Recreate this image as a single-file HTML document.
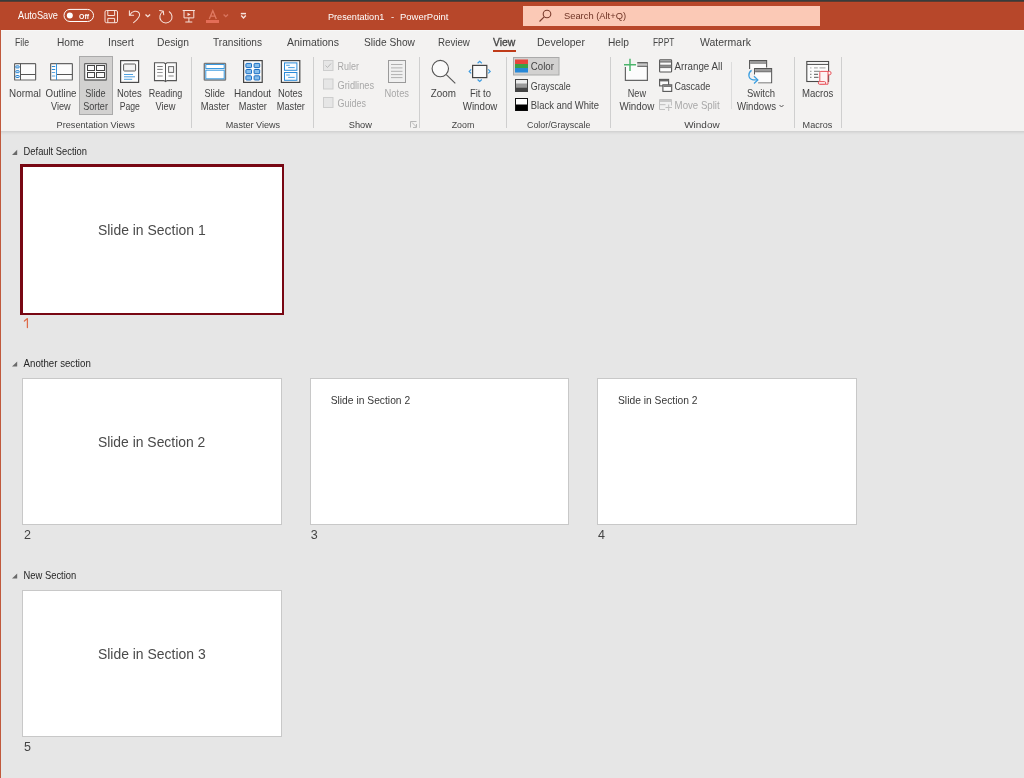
<!DOCTYPE html><html><head><meta charset="utf-8"><title>PowerPoint</title><style>html,body{margin:0;padding:0;overflow:hidden;background:#e6e6e6}</style></head><body><svg width="1024" height="778" viewBox="0 0 1024 778" style="display:block;will-change:transform;font-family:'Liberation Sans',sans-serif"><rect x="0" y="0" width="1024" height="778" fill="#e6e6e6" /><rect x="0" y="0" width="1024" height="30" fill="#b7472a" /><rect x="0" y="0" width="1024" height="1" fill="#373c3c" /><rect x="0" y="1" width="1024" height="1" fill="#5b3b31" /><rect x="0" y="2" width="1024" height="1" fill="#bd4729" /><rect x="0" y="30" width="1024" height="101" fill="#f3f2f1" /><rect x="0" y="30" width="1024" height="1" fill="#f7f7f7" /><rect x="0" y="131" width="1024" height="1" fill="#d3d3d3" /><rect x="0" y="132" width="1024" height="1" fill="#dadada" /><rect x="0" y="133" width="1024" height="1" fill="#e0e0e0" /><rect x="0" y="134" width="1024" height="1" fill="#e4e4e4" /><rect x="0" y="30" width="1" height="748" fill="#c0593c" /><text x="18.00" y="19.1" font-size="10.1" fill="#ffffff" textLength="39.96" lengthAdjust="spacingAndGlyphs" >AutoSave</text><rect x="64" y="9.4" width="29.5" height="12.1" rx="6" fill="none" stroke="#ffffff" stroke-width="1"/><circle cx="69.8" cy="15.4" r="3" fill="#ffffff"/><text x="79.10" y="18.8" font-size="8" fill="#ffffff" font-weight="700" textLength="9.95" lengthAdjust="spacingAndGlyphs" >Off</text><g fill="none" stroke="#f7e3dc" stroke-width="1"><rect x="105" y="10.5" width="12.5" height="12.2" rx="1.5"/><path d="M107.8 10.5v5h6.8v-5M107.8 22.7v-4.3h6.8v4.3"/></g><g fill="none" stroke="#f7e3dc" stroke-width="1.05" stroke-linecap="round"><path d="M129.4 10.8v4.5h4.2"/><path d="M129.8 15C132 10.8 137.5 10 139.3 13.2C140.8 16 137.5 19.5 133.6 22.6"/></g><path d="M145.5 14.5l2.3 2.2l2.3-2.2" fill="none" stroke="#f7e3dc" stroke-width="1.3"/><g fill="none" stroke="#f7e3dc" stroke-width="1.05" stroke-linecap="round"><path d="M169.3 11.8A6.1 6.1 0 1 1 162.9 11.6"/><path d="M159.6 10.6L163.3 11.2L163.7 14.8"/></g><g fill="none" stroke="#f7e3dc" stroke-width="1"><path d="M182.7 10.5h12.2M184 10.5v7.4h9.8v-7.4M188.9 17.9v4.1M185.3 22h7"/></g><path d="M187.5 12.8l3.2 1.6l-3.2 1.6z" fill="#f7e3dc"/><path d="M209.3 19l3.5-8.3l3.5 8.3M210.5 16.1h4.6" fill="none" stroke="#e07a62" stroke-width="1.3"/><rect x="206" y="20" width="13" height="3" fill="#e46d57" /><path d="M223.6 14.5l2.2 2.2l2.2-2.2" fill="none" stroke="#d97560" stroke-width="1.3"/><path d="M240.8 13.6h5.2" stroke="#f7e3dc" stroke-width="1.5"/><path d="M241.2 15.6l2.3 2.4l2.3-2.4" fill="none" stroke="#f7e3dc" stroke-width="1.4"/><text x="328.00" y="20.3" font-size="9.6" fill="#ffffff" textLength="56.30" lengthAdjust="spacingAndGlyphs" >Presentation1</text><text x="391.00" y="20.3" font-size="9.6" fill="#ffffff" >-</text><text x="400.00" y="20.3" font-size="9.6" fill="#ffffff" textLength="48.44" lengthAdjust="spacingAndGlyphs" >PowerPoint</text><rect x="523" y="6" width="297" height="20" fill="#fbc9b6" /><g fill="none" stroke="#7a3b2c" stroke-width="1.1"><circle cx="547" cy="14" r="3.8"/><path d="M544.2 16.8l-4.7 4.7"/></g><text x="564.00" y="19.4" font-size="9.4" fill="#6e3324" textLength="62.01" lengthAdjust="spacingAndGlyphs" >Search (Alt+Q)</text><text x="15.00" y="46" font-size="10.7" fill="#444444" textLength="14.01" lengthAdjust="spacingAndGlyphs" >File</text><text x="57.00" y="46" font-size="10.7" fill="#444444" textLength="26.97" lengthAdjust="spacingAndGlyphs" >Home</text><text x="108.00" y="46" font-size="10.7" fill="#444444" textLength="26.01" lengthAdjust="spacingAndGlyphs" >Insert</text><text x="157.00" y="46" font-size="10.7" fill="#444444" textLength="32.03" lengthAdjust="spacingAndGlyphs" >Design</text><text x="213.00" y="46" font-size="10.7" fill="#444444" textLength="49.04" lengthAdjust="spacingAndGlyphs" >Transitions</text><text x="287.00" y="46" font-size="10.7" fill="#444444" textLength="51.96" lengthAdjust="spacingAndGlyphs" >Animations</text><text x="364.00" y="46" font-size="10.7" fill="#444444" textLength="50.92" lengthAdjust="spacingAndGlyphs" >Slide Show</text><text x="438.00" y="46" font-size="10.7" fill="#444444" textLength="31.88" lengthAdjust="spacingAndGlyphs" >Review</text><text x="537.00" y="46" font-size="10.7" fill="#444444" textLength="47.98" lengthAdjust="spacingAndGlyphs" >Developer</text><text x="608.00" y="46" font-size="10.7" fill="#444444" textLength="20.96" lengthAdjust="spacingAndGlyphs" >Help</text><text x="653.00" y="46" font-size="10.7" fill="#444444" textLength="21.35" lengthAdjust="spacingAndGlyphs" >FPPT</text><text x="700.00" y="46" font-size="10.7" fill="#444444" textLength="50.91" lengthAdjust="spacingAndGlyphs" >Watermark</text><text x="493.00" y="46" font-size="10.7" fill="#454545" textLength="22.39" lengthAdjust="spacingAndGlyphs" stroke="#454545" stroke-width="0.3">View</text><rect x="493" y="50" width="23" height="2" fill="#c03c1a" /><rect x="79.5" y="56.5" width="33" height="58" fill="#d2d1d0" stroke="#aaaaaa" stroke-width="1"/><rect x="14.6" y="63.6" width="21" height="16.4" rx="0.6" fill="#fcfcfc" stroke="#666666" stroke-width="1.2"/><path d="M20.5 63.5v16.5M20.5 74.5h15" stroke="#555" stroke-width="1"/><rect x="15.8" y="65.9" width="3.4" height="2" rx="0.6" fill="#e6f1fb" stroke="#1f7fd0" stroke-width="1"/><rect x="15.8" y="70.7" width="3.4" height="2" rx="0.6" fill="#e6f1fb" stroke="#1f7fd0" stroke-width="1"/><rect x="15.8" y="75.5" width="3.4" height="2" rx="0.6" fill="#e6f1fb" stroke="#1f7fd0" stroke-width="1"/><text x="9.10" y="96.5" font-size="10.6" fill="#444444" textLength="31.73" lengthAdjust="spacingAndGlyphs" >Normal</text><rect x="50.6" y="63.6" width="21.8" height="16.4" rx="0.6" fill="#fcfcfc" stroke="#666666" stroke-width="1.2"/><path d="M57 74.5h15.5" stroke="#555" stroke-width="1"/><path d="M56.5 63.5v16.5" stroke="#3a94dc" stroke-width="1"/><path d="M51.8 66.5h3.4" stroke="#2a8ad8" stroke-width="1"/><path d="M51.8 69.5h3.4" stroke="#2a8ad8" stroke-width="1"/><path d="M51.8 72.5h3.4" stroke="#5aa6e2" stroke-width="1"/><path d="M51.8 76h3.4" stroke="#8cc0ea" stroke-width="1.5"/><text x="45.60" y="96.5" font-size="10.6" fill="#444444" textLength="30.88" lengthAdjust="spacingAndGlyphs" >Outline</text><text x="51.00" y="109.8" font-size="10.6" fill="#444444" textLength="19.69" lengthAdjust="spacingAndGlyphs" >View</text><rect x="84.6" y="63.6" width="21.8" height="16.4" rx="0.6" fill="#fcfcfc" stroke="#666666" stroke-width="1.3"/><g fill="#fafafa" stroke="#444" stroke-width="1"><rect x="87.5" y="65.5" width="7" height="5"/><rect x="96.5" y="65.5" width="8" height="5"/><rect x="87.5" y="72.5" width="7" height="5"/><rect x="96.5" y="72.5" width="8" height="5"/></g><text x="85.30" y="96.5" font-size="10.6" fill="#444444" textLength="20.24" lengthAdjust="spacingAndGlyphs" >Slide</text><text x="83.20" y="109.8" font-size="10.6" fill="#444444" textLength="24.73" lengthAdjust="spacingAndGlyphs" >Sorter</text><rect x="120.6" y="60.6" width="18" height="21.8" fill="#fdfdfd" stroke="#4a4a4a" stroke-width="1.2"/><rect x="123.6" y="64" width="12" height="7" rx="0.8" fill="#f2f2f2" stroke="#5a5a5a" stroke-width="1"/><path d="M124 74.5h9M124 76.8h11M124 79.3h8.2" stroke="#3c96dc" stroke-width="0.9"/><text x="117.00" y="96.5" font-size="10.6" fill="#444444" textLength="24.62" lengthAdjust="spacingAndGlyphs" >Notes</text><text x="119.70" y="109.8" font-size="10.6" fill="#444444" textLength="20.25" lengthAdjust="spacingAndGlyphs" >Page</text><path d="M154.5 62.8h9.5l1.5 1l1.5-1h9.4v17.8h-9.4l-1.5 1l-1.5-1h-9.5z" fill="#fcfcfc" stroke="#555" stroke-width="1.1"/><path d="M165.5 63.8v17.2" stroke="#555" stroke-width="1"/><rect x="168.6" y="66.6" width="5" height="5.8" fill="#f6f6f6" stroke="#6a6a6a" stroke-width="1"/><path d="M157.2 66.5h5.5" stroke="#6a6a6a" stroke-width="0.9"/><path d="M157.2 69.4h5.5" stroke="#6a6a6a" stroke-width="0.9"/><path d="M157.2 72.5h5.5" stroke="#8a8a8a" stroke-width="0.9"/><path d="M157.2 76h5.5" stroke="#aaaaaa" stroke-width="1.4"/><path d="M168.5 76h5.2" stroke="#aaaaaa" stroke-width="1.4"/><text x="148.70" y="96.5" font-size="10.6" fill="#444444" textLength="33.55" lengthAdjust="spacingAndGlyphs" >Reading</text><text x="155.40" y="109.8" font-size="10.6" fill="#444444" textLength="19.99" lengthAdjust="spacingAndGlyphs" >View</text><rect x="191" y="57" width="1" height="71" fill="#cfcfcf"/><rect x="313" y="57" width="1" height="71" fill="#cfcfcf"/><rect x="419" y="57" width="1" height="71" fill="#cfcfcf"/><rect x="506" y="57" width="1" height="71" fill="#cfcfcf"/><rect x="610" y="57" width="1" height="71" fill="#cfcfcf"/><rect x="794" y="57" width="1" height="71" fill="#cfcfcf"/><rect x="841" y="57" width="1" height="71" fill="#cfcfcf"/><rect x="731" y="62" width="1" height="47" fill="#dcdcdc"/><text x="56.60" y="127.5" font-size="9.4" fill="#444444" textLength="78.21" lengthAdjust="spacingAndGlyphs" >Presentation Views</text><rect x="204.3" y="63.4" width="21.2" height="16.6" rx="0.6" fill="#fcfcfc" stroke="#7a7a7a" stroke-width="1.4"/><g fill="#ffffff" stroke="#3a9ae0" stroke-width="1"><rect x="205.8" y="64.5" width="18.4" height="4"/><rect x="205.8" y="70.2" width="18.4" height="8.6"/></g><text x="204.50" y="96.5" font-size="10.6" fill="#444444" textLength="20.34" lengthAdjust="spacingAndGlyphs" >Slide</text><text x="200.70" y="109.8" font-size="10.6" fill="#444444" textLength="28.66" lengthAdjust="spacingAndGlyphs" >Master</text><rect x="243.6" y="60.6" width="18.6" height="21.8" fill="#fcfcfc" stroke="#444" stroke-width="1.2"/><rect x="245.9" y="63.4" width="5.6" height="4.2" rx="0.7" fill="#86bdea" stroke="#1a6fc4" stroke-width="1"/><rect x="245.9" y="69.5" width="5.6" height="4.2" rx="0.7" fill="#86bdea" stroke="#1a6fc4" stroke-width="1"/><rect x="245.9" y="75.8" width="5.6" height="4.2" rx="0.7" fill="#86bdea" stroke="#1a6fc4" stroke-width="1"/><rect x="254.1" y="63.4" width="5.6" height="4.2" rx="0.7" fill="#86bdea" stroke="#1a6fc4" stroke-width="1"/><rect x="254.1" y="69.5" width="5.6" height="4.2" rx="0.7" fill="#86bdea" stroke="#1a6fc4" stroke-width="1"/><rect x="254.1" y="75.8" width="5.6" height="4.2" rx="0.7" fill="#86bdea" stroke="#1a6fc4" stroke-width="1"/><text x="233.90" y="96.5" font-size="10.6" fill="#444444" textLength="37.20" lengthAdjust="spacingAndGlyphs" >Handout</text><text x="238.70" y="109.8" font-size="10.6" fill="#444444" textLength="28.26" lengthAdjust="spacingAndGlyphs" >Master</text><rect x="281.4" y="60.6" width="18.4" height="21.8" fill="#fcfcfc" stroke="#444" stroke-width="1.2"/><g fill="#f7fbfe" stroke="#2a8ad8" stroke-width="1"><rect x="284.5" y="62.9" width="12.4" height="7.4"/><rect x="284.5" y="72.5" width="12.4" height="7.8"/></g><path d="M286.2 65.3h3.6M288.2 67.6h6.5M286.2 75h3.6M288.2 77.4h6.5" stroke="#4aa0e2" stroke-width="1"/><text x="277.90" y="96.5" font-size="10.6" fill="#444444" textLength="24.62" lengthAdjust="spacingAndGlyphs" >Notes</text><text x="276.80" y="109.8" font-size="10.6" fill="#444444" textLength="28.06" lengthAdjust="spacingAndGlyphs" >Master</text><text x="225.80" y="127.5" font-size="9.4" fill="#444444" textLength="54.33" lengthAdjust="spacingAndGlyphs" >Master Views</text><rect x="323.5" y="60.5" width="9.5" height="10" fill="#e6e6e6" stroke="#cdcdcd" stroke-width="1"/><rect x="323.5" y="79" width="9.5" height="10" fill="#e6e6e6" stroke="#cdcdcd" stroke-width="1"/><rect x="323.5" y="97.5" width="9.5" height="10" fill="#e6e6e6" stroke="#cdcdcd" stroke-width="1"/><path d="M325.5 65.5l2 2l3.5-4" fill="none" stroke="#b9b9b9" stroke-width="1"/><text x="337.60" y="69.8" font-size="10.4" fill="#a8a8a8" textLength="21.40" lengthAdjust="spacingAndGlyphs" >Ruler</text><text x="337.60" y="88.9" font-size="10.4" fill="#a8a8a8" textLength="36.45" lengthAdjust="spacingAndGlyphs" >Gridlines</text><text x="337.60" y="107.4" font-size="10.4" fill="#a8a8a8" textLength="28.38" lengthAdjust="spacingAndGlyphs" >Guides</text><rect x="388.5" y="60.5" width="17" height="22" fill="#f0f0f0" stroke="#9a9a9a" stroke-width="1"/><path d="M391 64.5h11.5" stroke="#b0b0b0" stroke-width="1"/><path d="M391 67.9h11.5" stroke="#b0b0b0" stroke-width="1"/><path d="M391 71.3h11.5" stroke="#b0b0b0" stroke-width="1"/><path d="M391 74.6h11.5" stroke="#b0b0b0" stroke-width="1"/><path d="M391 77.6h11.5" stroke="#b0b0b0" stroke-width="1"/><text x="384.60" y="96.5" font-size="10.6" fill="#a8a8a8" textLength="24.42" lengthAdjust="spacingAndGlyphs" >Notes</text><text x="348.80" y="127.5" font-size="9.4" fill="#3a3a3a" textLength="23.12" lengthAdjust="spacingAndGlyphs" >Show</text><path d="M410.5 127.5v-6h6M412 122.5l4.5 4.5M416.5 124v3.5h-3.5" fill="none" stroke="#b0b0b0" stroke-width="0.9"/><g fill="none" stroke="#555" stroke-width="1.1"><circle cx="440.3" cy="68.6" r="8.2" fill="#fafafa"/><path d="M446.3 74.6l9 8.8"/></g><text x="430.80" y="96.5" font-size="10.6" fill="#444444" textLength="25.16" lengthAdjust="spacingAndGlyphs" >Zoom</text><rect x="472.6" y="65.4" width="14.2" height="12.2" fill="#fafafa" stroke="#444" stroke-width="1.2"/><g fill="none" stroke="#3c9be0" stroke-width="1.2"><path d="M477.6 63.3l2.1-2l2.1 2M477.6 79.5l2.1 2l2.1-2M471.2 69.4l-2 2l2 2M488.2 69.4l2 2l-2 2"/></g><text x="469.90" y="96.5" font-size="10.6" fill="#444444" textLength="21.13" lengthAdjust="spacingAndGlyphs" >Fit to</text><text x="462.70" y="109.8" font-size="10.6" fill="#444444" textLength="34.66" lengthAdjust="spacingAndGlyphs" >Window</text><text x="451.70" y="127.5" font-size="9.4" fill="#444444" textLength="22.56" lengthAdjust="spacingAndGlyphs" >Zoom</text><rect x="513.5" y="57.5" width="45.5" height="17.5" fill="#d2d1d0" stroke="#aaaaaa" stroke-width="1"/><rect x="515" y="59.5" width="13" height="4.5" fill="#e8443a" /><rect x="515" y="64" width="13" height="4" fill="#3aa046" /><rect x="515" y="68" width="13" height="4.5" fill="#2788d8" /><text x="530.80" y="69.8" font-size="10.4" fill="#444444" textLength="23.10" lengthAdjust="spacingAndGlyphs" >Color</text><rect x="515.5" y="79.5" width="12" height="12" fill="#ececec" stroke="#444" stroke-width="1"/><rect x="516" y="83.5" width="11" height="4" fill="#9a9a9a" /><rect x="516" y="87.5" width="11" height="3.5" fill="#444" /><text x="530.80" y="89.6" font-size="10.4" fill="#444444" textLength="39.91" lengthAdjust="spacingAndGlyphs" >Grayscale</text><rect x="515.5" y="98.5" width="12" height="12" fill="#ffffff" stroke="#111" stroke-width="1"/><rect x="516" y="104.5" width="11" height="6" fill="#000" /><text x="530.80" y="108.8" font-size="10.4" fill="#444444" textLength="68.15" lengthAdjust="spacingAndGlyphs" >Black and White</text><text x="527.00" y="127.5" font-size="9.4" fill="#444444" textLength="63.39" lengthAdjust="spacingAndGlyphs" >Color/Grayscale</text><path d="M625.4 67v13.3h22v-17.5h-10" fill="#fcfcfc" stroke="#666" stroke-width="1.2"/><rect x="637.3" y="63.2" width="10" height="3" fill="#c8c8c8" /><path d="M637.3 62.8h10.1M637.3 66.3h10.1" stroke="#555" stroke-width="1"/><path d="M624 64.8h12.1M630 58.8v12.2" stroke="#4cb56c" stroke-width="1.5"/><text x="627.70" y="96.5" font-size="10.6" fill="#444444" textLength="18.30" lengthAdjust="spacingAndGlyphs" >New</text><text x="619.40" y="109.8" font-size="10.6" fill="#444444" textLength="34.86" lengthAdjust="spacingAndGlyphs" >Window</text><rect x="659.6" y="59.8" width="12" height="12.2" rx="0.8" fill="#fcfcfc" stroke="#555" stroke-width="1.1"/><rect x="660" y="60.3" width="11.2" height="1.6" fill="#8f8f8f" /><rect x="660" y="65.3" width="11.2" height="2.2" fill="#8f8f8f" /><path d="M660 62.1h11.2M660 65.2h11.2M660 67.6h11.2" stroke="#5a5a5a" stroke-width="0.8"/><text x="674.60" y="69.9" font-size="10.4" fill="#444444" textLength="47.71" lengthAdjust="spacingAndGlyphs" >Arrange All</text><rect x="659.6" y="79.4" width="9" height="6.5" fill="#fcfcfc" stroke="#555" stroke-width="1.1"/><rect x="660" y="79.8" width="8.3" height="1.6" fill="#666" /><rect x="662.9" y="84.8" width="8.8" height="6.6" fill="#fcfcfc" stroke="#555" stroke-width="1.1"/><rect x="663.3" y="85.2" width="8" height="1.8" fill="#777" /><text x="674.60" y="89.7" font-size="10.4" fill="#444444" textLength="35.56" lengthAdjust="spacingAndGlyphs" >Cascade</text><path d="M665 109.5h-5.5v-10h12v6" fill="#f0f0f0" stroke="#c2c2c2" stroke-width="1"/><rect x="660" y="100" width="11.5" height="2" fill="#c8c8c8" /><path d="M660 104.7h5.5M665.5 107.5h6.5M668.7 104.5v6.5" stroke="#bdbdbd" stroke-width="1"/><text x="674.60" y="108.5" font-size="10.4" fill="#a8a8a8" textLength="45.08" lengthAdjust="spacingAndGlyphs" >Move Split</text><text x="684.20" y="127.5" font-size="9.4" fill="#444444" textLength="35.47" lengthAdjust="spacingAndGlyphs" >Window</text><path d="M749.6 69v-8.5h17v7" fill="#fcfcfc" stroke="#555" stroke-width="1.1"/><rect x="750.1" y="61" width="16" height="3" fill="#9a9a9a" /><path d="M754.6 74.5v-6h17v14.3h-13.5" fill="#fcfcfc" stroke="#555" stroke-width="1.1"/><rect x="755.1" y="69" width="16" height="3" fill="#9a9a9a" /><rect x="755.1" y="72" width="16" height="10.3" fill="#fcfcfc"/><path d="M755.1 71.8h16" stroke="#666" stroke-width="0.8"/><path d="M751.6 70.4C748 72.5 747.5 78.8 753 79.8h4.5" fill="none" stroke="#3b9ee0" stroke-width="1.3"/><path d="M754 76.3l3.8 3.6l-3.8 3.5" fill="none" stroke="#3b9ee0" stroke-width="1.3"/><text x="747.00" y="96.5" font-size="10.6" fill="#444444" textLength="27.95" lengthAdjust="spacingAndGlyphs" >Switch</text><text x="736.90" y="109.8" font-size="10.6" fill="#444444" textLength="39.06" lengthAdjust="spacingAndGlyphs" >Windows</text><path d="M779.5 105l2 2l2-2" fill="none" stroke="#555" stroke-width="1"/><rect x="806.8" y="61.5" width="21.8" height="20" fill="#fcfcfc" stroke="#4a4a4a" stroke-width="1.1"/><path d="M807 64.4h21.5" stroke="#4a4a4a" stroke-width="1"/><path d="M810.2 67.9h1.2M814 67.9h3.8M819.5 67.9h6" stroke="#b0b0b0" stroke-width="1.3"/><path d="M810.2 71.3h1.2M814 71.3h6" stroke="#999" stroke-width="1.2"/><path d="M810.2 74.4h1.2M814 74.4h4M810.2 77.4h1.2M814 77.4h4.5" stroke="#777" stroke-width="1.2"/><path d="M819.8 84.2v-11.8a1 1 0 0 1 1-1h8.6a1.3 1.3 0 0 1 0 3.4h-1.4v9.4z" fill="#fdf4f4" stroke="#e8525a" stroke-width="1"/><path d="M828 71.4v3.4" stroke="#e8525a" stroke-width="1"/><rect x="818.3" y="81.6" width="7.4" height="2.6" rx="1.3" fill="#fdf4f4" stroke="#e8525a" stroke-width="1"/><text x="801.90" y="96.5" font-size="10.6" fill="#444444" textLength="31.48" lengthAdjust="spacingAndGlyphs" >Macros</text><text x="802.60" y="127.5" font-size="9.4" fill="#444444" textLength="29.78" lengthAdjust="spacingAndGlyphs" >Macros</text><path d="M17.2 149.7v5.2h-5.2z" fill="#6a6a6a"/><text x="23.60" y="155.1" font-size="10.4" fill="#262626" textLength="63.41" lengthAdjust="spacingAndGlyphs" >Default Section</text><path d="M17.2 361.40000000000003v5.2h-5.2z" fill="#6a6a6a"/><text x="23.60" y="366.8" font-size="10.4" fill="#262626" textLength="67.18" lengthAdjust="spacingAndGlyphs" >Another section</text><path d="M17.2 573.4v5.2h-5.2z" fill="#6a6a6a"/><text x="23.60" y="578.8" font-size="10.4" fill="#262626" textLength="52.64" lengthAdjust="spacingAndGlyphs" >New Section</text><rect x="20" y="164" width="264" height="151" fill="#780713" /><rect x="23" y="167" width="259" height="146" fill="#ffffff" /><rect x="22" y="378" width="260" height="147" fill="#c8c8c8" /><rect x="23" y="379" width="258" height="145" fill="#ffffff" /><rect x="310" y="378" width="259" height="147" fill="#c8c8c8" /><rect x="311" y="379" width="257" height="145" fill="#ffffff" /><rect x="597" y="378" width="260" height="147" fill="#c8c8c8" /><rect x="598" y="379" width="258" height="145" fill="#ffffff" /><rect x="22" y="590" width="260" height="147" fill="#c8c8c8" /><rect x="23" y="591" width="258" height="145" fill="#ffffff" /><text x="97.90" y="235.2" font-size="15.4" fill="#4a4a4a" textLength="107.75" lengthAdjust="spacingAndGlyphs" >Slide in Section 1</text><text x="97.90" y="447.2" font-size="15.4" fill="#4a4a4a" textLength="107.45" lengthAdjust="spacingAndGlyphs" >Slide in Section 2</text><text x="97.90" y="659.2" font-size="15.4" fill="#4a4a4a" textLength="107.75" lengthAdjust="spacingAndGlyphs" >Slide in Section 3</text><text x="330.70" y="404" font-size="10.8" fill="#383838" textLength="79.46" lengthAdjust="spacingAndGlyphs" >Slide in Section 2</text><text x="618.00" y="404" font-size="10.8" fill="#383838" textLength="79.46" lengthAdjust="spacingAndGlyphs" >Slide in Section 2</text><path d="M27.4 318.6v9M24.4 321l3-2.4" fill="none" stroke="#de6a48" stroke-width="1.25" stroke-linecap="round"/><text x="24.00" y="538.9" font-size="12.5" fill="#444" >2</text><text x="310.80" y="538.9" font-size="12.5" fill="#444" >3</text><text x="597.90" y="538.9" font-size="12.5" fill="#444" >4</text><text x="24.00" y="751.2" font-size="12.5" fill="#444" >5</text></svg></body></html>
